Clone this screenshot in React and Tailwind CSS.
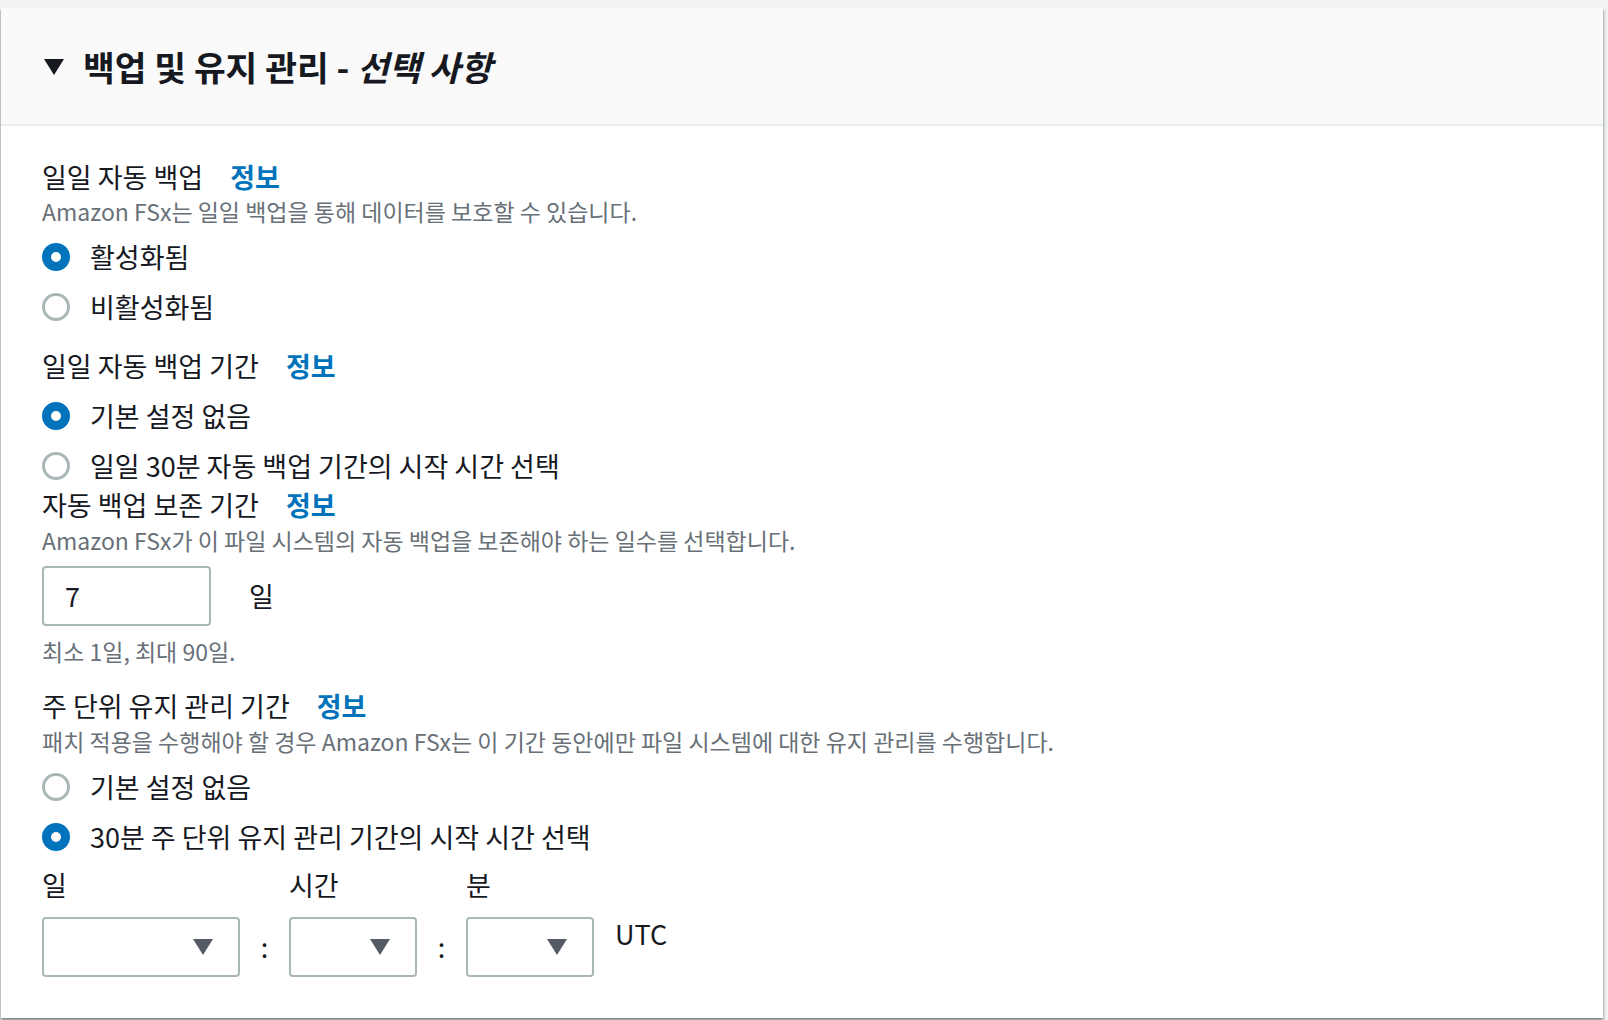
import React from "react";

const font = "font-['Noto_Sans_CJK_KR','Noto_Sans',sans-serif]";

const Radio = ({ checked, label }) => (
  <div className="flex items-center h-[40px]">
    {checked ? (
      <span className="w-[28px] h-[28px] rounded-full border-[9px] border-[#0073bb] bg-white shrink-0" />
    ) : (
      <span className="w-[28px] h-[28px] rounded-full border-[3px] border-[#aab7b8] bg-white shrink-0" />
    )}
    <span className="ml-[20px] text-[27px] leading-[38px] text-[#16191f]">{label}</span>
  </div>
);

const Label = ({ children, className = "" }) => (
  <div className={`flex items-center h-[38px] text-[27px] text-[#16191f] ${className}`}>
    <span>{children}</span>
    <span className="ml-[27px] font-bold text-[#0073bb]">정보</span>
  </div>
);

const Desc = ({ children, className = "" }) => (
  <div className={`h-[30px] flex items-center text-[23px] text-[#687078] ${className}`}>{children}</div>
);

const Select = () => (
  <div className="h-[60px] border-2 border-[#aab7b8] rounded-[4px] bg-white flex items-center justify-end pr-[25px]">
    <svg width="20" height="16" viewBox="0 0 20 16">
      <polygon points="0,0 20,0 10,16" fill="#545b64" />
    </svg>
  </div>
);

const App = () => {
  return (
    <div className={`min-h-[1020px] bg-[#f2f3f3] pt-[8px] pl-[1px] pr-[5px] pb-[3px] ${font}`}>
      <div className="bg-white shadow-[0_2px_2px_0_rgba(0,28,36,0.3),2px_2px_2px_0_rgba(0,28,36,0.15),-2px_2px_2px_0_rgba(0,28,36,0.15)]">
        <div className="h-[118px] bg-[#fafafa] border-b-2 border-[#eaeded] flex items-center pl-[43px]">
          <svg width="20" height="16" viewBox="0 0 20 16" className="mt-[2px]">
            <polygon points="0,0 20,0 10,16" fill="#16191f" />
          </svg>
          <h2 className="ml-[19px] text-[34.5px] font-bold text-[#16191f] leading-[42px]">
            백업 및 유지 관리 - <i>선택 사항</i>
          </h2>
        </div>

        <div className="pl-[41px] pt-[32px] pb-[41px]">
          <Label>일일 자동 백업</Label>
          <Desc>Amazon FSx는 일일 백업을 통해 데이터를 보호할 수 있습니다.</Desc>
          <div className="mt-[11px] flex flex-col gap-[10px]">
            <Radio checked label="활성화됨" />
            <Radio label="비활성화됨" />
          </div>

          <Label className="mt-[20px]">일일 자동 백업 기간</Label>
          <div className="mt-[11px] flex flex-col gap-[10px]">
            <Radio checked label="기본 설정 없음" />
            <Radio label="일일 30분 자동 백업 기간의 시작 시간 선택" />
          </div>

          <Label>자동 백업 보존 기간</Label>
          <Desc className="mt-[1px]">Amazon FSx가 이 파일 시스템의 자동 백업을 보존해야 하는 일수를 선택합니다.</Desc>
          <div className="mt-[11px] flex items-center">
            <div className="w-[169px] h-[60px] border-2 border-[#aab7b8] rounded-[4px] flex items-center pl-[21px] text-[27px] text-[#16191f]">
              7
            </div>
            <span className="ml-[38px] text-[27px] text-[#16191f]">일</span>
          </div>
          <Desc className="mt-[10px]">최소 1일, 최대 90일.</Desc>

          <Label className="mt-[21px]">주 단위 유지 관리 기간</Label>
          <Desc className="mt-[1px]">
            패치 적용을 수행해야 할 경우 Amazon FSx는 이 기간 동안에만 파일 시스템에 대한 유지 관리를 수행합니다.
          </Desc>
          <div className="mt-[11px] flex flex-col gap-[10px]">
            <Radio label="기본 설정 없음" />
            <Radio checked label="30분 주 단위 유지 관리 기간의 시작 시간 선택" />
          </div>

          <div className="mt-[9px] grid grid-cols-[198px_49px_128px_49px_128px_auto] text-[27px] text-[#16191f]">
            <div className="h-[38px] leading-[38px]">일</div>
            <div />
            <div className="h-[38px] leading-[38px]">시간</div>
            <div />
            <div className="h-[38px] leading-[38px]">분</div>
            <div />

            <div className="mt-[13px]"><Select /></div>
            <div className="mt-[13px] flex items-center justify-center">:</div>
            <div className="mt-[13px]"><Select /></div>
            <div className="mt-[13px] flex items-center justify-center">:</div>
            <div className="mt-[13px]"><Select /></div>
            <div className="mt-[11px] pl-[21px] leading-[38px]">UTC</div>
          </div>
        </div>
      </div>
    </div>
  );
};

export default App;
